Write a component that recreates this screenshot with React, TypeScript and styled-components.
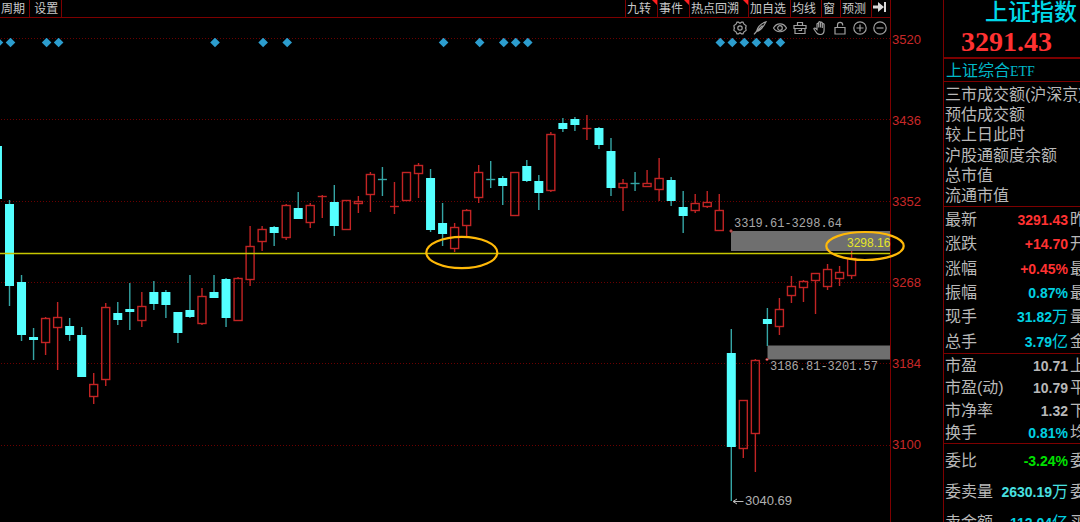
import React from 'react';
import styled, { createGlobalStyle } from 'styled-components';

const colors = {
  grid: '#7d0000',
  red: '#ff3232',
  candleRed: '#c22424',
  cyan: '#54ffff',
  teal: '#00d0e0',
  text: '#b8b8b8',
  yellow: '#c6c600',
  green: '#00e000',
  mark: '#ffb908',
};

const sans = `'Liberation Sans', 'Noto Sans CJK SC', sans-serif`;
const serif = `'Liberation Serif', 'Noto Sans CJK SC', serif`;
const mono = `'Liberation Mono', monospace`;

const GlobalStyle = createGlobalStyle`
  * { box-sizing: border-box; }
  body { margin: 0; background: #000; color: ${colors.text}; font-family: ${sans}; overflow: hidden; }
  button { appearance: none; background: none; border: 0; padding: 0; margin: 0; color: inherit; font: inherit; cursor: pointer; }
`;

const Screen = styled.div`
  display: flex;
  height: 100vh;
  overflow: hidden;
`;

const ChartArea = styled.main`
  flex: 1;
  min-width: 0;
  display: flex;
  flex-direction: column;
  border-right: 1px solid ${colors.grid};
  position: relative;
  z-index: 1;
`;

const TabBar = styled.nav`
  display: flex;
  justify-content: space-between;
  height: 18px;
  border-bottom: 1px solid ${colors.grid};
`;

const TabGroup = styled.div`
  display: flex;
`;

const Tab = styled.button<{ $side: 'left' | 'right'; $width: number; $hot?: boolean }>`
  position: relative;
  width: ${(p) => p.$width}px;
  padding-left: 1px;
  border-style: solid;
  border-color: ${colors.grid};
  border-width: 0;
  border-${(p) => (p.$side === 'left' ? 'right' : 'left')}-width: 1px;
  font-size: 12px;
  line-height: 16px;
  text-align: left;
  white-space: nowrap;
  color: #c8c8c8;
  ${(p) =>
    p.$hot &&
    `&::after {
      content: '';
      position: absolute;
      top: 0;
      right: 0;
      border-top: 5px solid #ff2020;
      border-left: 5px solid transparent;
    }`}
`;

const Tools = styled.div`
  display: flex;
  justify-content: flex-end;
  height: 20px;
`;

const Tool = styled.button`
  display: grid;
  place-items: center;
  width: 20px;
  color: #a0a0a0;
  svg { display: block; }
`;

const Plot = styled.div`
  flex: 1;
  display: flex;
  justify-content: flex-end;
  min-height: 0;
  clip-path: inset(0 -20px 0 0);
  svg { flex: none; overflow: visible; display: block; }
`;

const Axis = styled.ul`
  flex: 0 0 52px;
  margin: 0;
  padding: 31px 0 0 1px;
  list-style: none;
`;

const Tick = styled.li`
  height: 81px;
  font-size: 13px;
  line-height: 17px;
  color: #c82828;
`;

const Panel = styled.aside`
  flex: 0 0 137px;
  border-left: 1px solid ${colors.grid};
  overflow: hidden;
  white-space: nowrap;
`;

const Quote = styled.header`
  height: 59px;
  border-bottom: 2px solid ${colors.grid};
`;

const IndexName = styled.h1`
  margin: 0;
  padding-left: 41px;
  font-size: 23px;
  line-height: 24px;
  font-weight: 500;
  color: #00d8e8;
`;

const Price = styled.div`
  padding-left: 17px;
  font: bold 28px/36px ${serif};
  color: ${colors.red};
`;

const EtfLink = styled.a`
  display: block;
  height: 23px;
  padding-left: 2px;
  border-bottom: 1px solid ${colors.grid};
  font: 16px/24px ${serif};
  color: #00b8c8;
  text-decoration: none;
`;

const Latin = styled.span`
  font-size: 14px;
`;

const StatList = styled.ul`
  display: grid;
  height: 125px;
  margin: 0;
  padding: 3px 0 0 1px;
  list-style: none;
  font-size: 16px;
  line-height: 20px;
  align-items: center;
  border-bottom: 1px solid ${colors.grid};
`;

const DataTable = styled.table<{ $height: number; $last?: boolean }>`
  width: 143px;
  height: ${(p) => p.$height}px;
  table-layout: fixed;
  border-collapse: separate;
  border-spacing: 0;
  border-bottom: ${(p) => (p.$last ? '0' : `1px solid ${colors.grid}`)};
`;

const Label = styled.th`
  width: 50px;
  padding: 2px 0 0 1px;
  font-size: 16px;
  line-height: 20px;
  font-weight: 400;
  text-align: left;
`;

const Value = styled.td<{ $color: string }>`
  width: 74px;
  padding: 2px 0 0;
  font-size: 14px;
  line-height: 20px;
  font-weight: 700;
  text-align: right;
  color: ${(p) => p.$color};
`;

const Unit = styled.span`
  font-size: 16px;
  font-weight: 400;
`;

const Next = styled.td`
  padding: 2px 0 0 2px;
  font-size: 16px;
  line-height: 20px;
`;

/* [high, body top, body bottom, low, rising] for each session, in plot units */
type Candle = [number, number, number, number, 0 | 1];
const candles: Candle[] = [
  [146, 146, 199, 199, 0], [200, 204, 286, 306, 0], [275, 282, 335, 341, 0], [328, 337, 340, 360, 0],
  [317, 318, 343, 355, 1], [302, 317, 328, 370, 1], [318, 326, 335, 341, 0], [327, 335, 377, 377, 0],
  [373, 384, 397, 404, 1], [303, 307, 380, 386, 1], [302, 313, 320, 325, 0], [283, 309, 312, 330, 0],
  [292, 306, 321, 327, 1], [281, 292, 304, 310, 0], [290, 292, 305, 318, 0], [312, 312, 333, 343, 0],
  [275, 310, 317, 318, 0], [288, 296, 324, 325, 1], [275, 292, 298, 298, 0], [278, 279, 318, 327, 0],
  [277, 278, 321, 321, 1], [226, 246, 280, 286, 1], [226, 229, 242, 251, 1], [226, 227, 233, 246, 0],
  [204, 205, 238, 240, 1], [192, 208, 219, 219, 0], [203, 205, 223, 228, 1], [195, 196, 197, 218, 1],
  [185, 202, 226, 236, 0], [200, 200, 230, 230, 1], [196, 201, 204, 213, 1], [172, 174, 195, 212, 1],
  [167, 179, 180, 196, 0], [182, 206, 207, 214, 1], [172, 172, 201, 201, 1], [163, 165, 174, 198, 1],
  [169, 178, 230, 232, 0], [203, 223, 234, 246, 0], [223, 227, 249, 252, 1], [209, 210, 226, 236, 1],
  [165, 172, 198, 203, 1], [161, 179, 180, 188, 0], [176, 178, 186, 205, 0], [172, 172, 216, 216, 1],
  [160, 166, 181, 182, 0], [175, 181, 193, 210, 0], [132, 134, 191, 192, 1], [118, 123, 129, 132, 0],
  [117, 119, 125, 131, 0], [115, 128, 129, 140, 1], [127, 128, 145, 149, 0], [138, 151, 188, 196, 0],
  [179, 183, 188, 211, 1], [172, 183, 184, 191, 0], [170, 183, 187, 187, 1], [158, 178, 190, 201, 1],
  [177, 180, 201, 206, 0], [191, 207, 216, 233, 0], [194, 203, 211, 213, 1], [191, 202, 207, 208, 1],
  [194, 210, 231, 231, 1], [329, 353, 447, 501, 0], [400, 400, 449, 458, 1], [359, 360, 434, 472, 1],
  [308, 319, 324, 346, 0], [298, 309, 327, 335, 1], [276, 286, 296, 303, 1], [280, 281, 288, 302, 1],
  [273, 273, 281, 314, 1], [264, 269, 287, 290, 1], [266, 272, 279, 286, 1], [251, 258, 276, 279, 1],
];

const centre = (i: number) => 9.5 + (i - 1) * 12.03;
const events = [0, 1, 4, 5, 18, 22, 24, 37, 40, 42, 43, 44, 60, 61, 62, 63, 64, 65];
const gridLines = [38.5, 119.5, 201.5, 282.5, 363.5, 445.5];
const ticks = [3520, 3436, 3352, 3268, 3184, 3100];

function CandleShape({ index, data }: { index: number; data: Candle }) {
  const [high, top, bottom, low, rising] = data;
  const x = centre(index);
  const stroke = rising ? colors.candleRed : '#35a5a5';
  const flat = bottom - top <= 1;
  return (
    <g stroke={stroke} strokeWidth={1.4}>
      {high < top && <line x1={x} x2={x} y1={high} y2={top} />}
      {low > bottom && <line x1={x} x2={x} y1={bottom} y2={low} />}
      {flat ? (
        <line x1={x - 4.5} x2={x + 4.5} y1={top + 0.5} y2={top + 0.5} />
      ) : rising ? (
        <rect x={x - 4} y={top + 0.5} width={8} height={bottom - top - 1} fill="none" />
      ) : (
        <rect x={x - 4.5} y={top} width={9} height={bottom - top} fill={colors.cyan} stroke="none" />
      )}
    </g>
  );
}

function Chart() {
  return (
    <svg width="890" height="484" viewBox="0 38 890 484" role="img" aria-label="上证指数 K线">
      <g stroke="#6a0000" strokeDasharray="1 2">
        {gridLines.map((y) => (
          <line key={y} x1={-2000} x2={890} y1={y} y2={y} />
        ))}
      </g>
      <g fill="#2c9dce">
        {events.map((i) => (
          <path key={i} d={`M${centre(i) + 1} 37.7l4.800 4.800-4.800 4.800-4.800-4.800z`} />
        ))}
      </g>
      <rect x="731" y="231" width="159" height="20" fill="#6f6f6f" />
      <rect x="767.5" y="345.5" width="122.5" height="14" fill="#6f6f6f" />
      {candles.map((c, i) => (
        <CandleShape key={i} index={i} data={c} />
      ))}
      <line x1={-2000} x2={890} y1={253.5} y2={253.5} stroke={colors.yellow} strokeWidth={1.4} />
      <g fill="#d8b0b0" stroke="#a02020">
        <circle cx="731" cy="231" r="1.2" />
        <circle cx="767" cy="359.5" r="1.2" />
      </g>
      <g fill="#a8a8a8" fontFamily={mono} fontSize="12">
        <text x="734" y="227">3319.61-3298.64</text>
        <text x="770" y="370">3186.81-3201.57</text>
      </g>
      <text x="847" y="247" fill="#e6e628" fontFamily={sans} fontSize="12">3298.16</text>
      <text x="745" y="505" fill="#b0b0b0" fontFamily={sans} fontSize="13">3040.69</text>
      <path d="M743.5 501.500H733M737 499l-4 2.500 4 2.500" fill="none" stroke="#b8b8b8" />
      <g fill="none" stroke={colors.mark} strokeWidth={2.2}>
        <ellipse cx="461.800" cy="252.500" rx="35.500" ry="15.700" />
        <ellipse cx="865" cy="246" rx="38.700" ry="14" />
      </g>
    </svg>
  );
}

const toolIcons: { name: string; art: React.ReactNode }[] = [
  { name: '设置', art: <><path d="M4 1.200h1.500l1.500 1 1.500-1H10l1 2 2 1.300v1.500L12.500 7l.5 1v1.500L11 10.800l-1 2H8.500l-1.500-1-1.500 1H4l-1-2-2-1.300V8l.5-1L1 6V4.500l2-1.300z" /><circle cx="7" cy="7" r="2.200" /></> },
  { name: '画笔', art: <path d="M13 .8C8 2.500 4.500 6 3.500 10.500c4-1 7-4.500 9.500-9.700zM3.500 10.500L1 13.300M3.500 10.500L9.500 4.500" /> },
  { name: '显示', art: <><path d="M.5 7C3.500 1.500 10.500 1.500 13.500 7 10.500 12 3.500 12 .5 7z" /><circle cx="7" cy="7" r="2.300" /></> },
  { name: '工具箱', art: <path d="M1 4.500h12v3H1zM2 7.500v5h10v-5M4.500 4.500v-3h5v3M5.500 9.500h3v-2" /> },
  { name: '拖动', art: <path d="M4 8.500V3a.9.9 0 011.700 0v3.500V1.500a.9.9 0 011.800 0v5-4.500a.9.9 0 011.800 0V7 3.500a.9.9 0 011.800 0V9c0 3-1.500 4.500-4 4.500-2.500 0-3.500-1-4.500-3L.8 7.800c.5-1 1.500-.9 2.200-.1z" /> },
  { name: '锁定', art: <path d="M2 6.500h10v6.500H2zM4.500 6.500V4a2.600 2.600 0 015.200 0v.5" /> },
  { name: '放大', art: <><circle cx="7" cy="7" r="6.200" /><path d="M7 3.500v7M3.500 7h7" /></> },
  { name: '缩小', art: <><circle cx="7" cy="7" r="6.200" /><path d="M3.500 7h7" /></> },
];

const rightTabs: { text: string; width: number; hot?: boolean }[] = [
  { text: '九转', width: 32, hot: true },
  { text: '事件', width: 32, hot: true },
  { text: '热点回溯', width: 59, hot: true },
  { text: '加自选', width: 42 },
  { text: '均线', width: 31 },
  { text: '窗', width: 19 },
  { text: '预测', width: 31 },
];

type Row = { label: string; value: string; unit?: string; color: string; next: string };
const quoteRows: Row[] = [
  { label: '最新', value: '3291.43', color: colors.red, next: '昨' },
  { label: '涨跌', value: '+14.70', color: colors.red, next: '开' },
  { label: '涨幅', value: '+0.45%', color: colors.red, next: '最' },
  { label: '振幅', value: '0.87%', color: colors.teal, next: '最' },
  { label: '现手', value: '31.82', unit: '万', color: colors.teal, next: '量' },
  { label: '总手', value: '3.79', unit: '亿', color: colors.teal, next: '金' },
];
const ratioRows: Row[] = [
  { label: '市盈', value: '10.71', color: colors.text, next: '上' },
  { label: '市盈(动)', value: '10.79', color: colors.text, next: '平' },
  { label: '市净率', value: '1.32', color: colors.text, next: '下' },
  { label: '换手', value: '0.81%', color: colors.teal, next: '均' },
];
const orderRows: Row[] = [
  { label: '委比', value: '-3.24%', color: colors.green, next: '委' },
  { label: '委卖量', value: '2630.19', unit: '万', color: '#48e0e0', next: '委' },
  { label: '卖金额', value: '112.04', unit: '亿', color: colors.teal, next: '买' },
];
const stats = ['三市成交额(沪深京)', '预估成交额', '较上日此时', '沪股通额度余额', '总市值', '流通市值'];

function Rows({ rows, height, last }: { rows: Row[]; height: number; last?: boolean }) {
  return (
    <DataTable $height={height} $last={last}>
      <tbody>
        {rows.map((r) => (
          <tr key={r.label}>
            <Label scope="row">{r.label}</Label>
            <Value $color={r.color}>
              {r.value}
              {r.unit && <Unit>{r.unit}</Unit>}
            </Value>
            <Next>{r.next}</Next>
          </tr>
        ))}
      </tbody>
    </DataTable>
  );
}

export default function App() {
  return (
    <Screen>
      <GlobalStyle />
      <ChartArea>
        <TabBar>
          <TabGroup>
            <Tab $side="left" $width={30}>周期</Tab>
            <Tab $side="left" $width={32}>&nbsp;设置</Tab>
          </TabGroup>
          <TabGroup>
            {rightTabs.map((t) => (
              <Tab key={t.text} $side="right" $width={t.width} $hot={t.hot}>{t.text}</Tab>
            ))}
            <Tab $side="right" $width={19} aria-label="展开">
              <svg width="14" height="14" viewBox="0 0 14 14" fill="#d8d8d8">
                <path d="M0 5.500h5V2l6 5-6 5V8.500H0zM11 2h2v10h-2z" />
              </svg>
            </Tab>
          </TabGroup>
        </TabBar>
        <Tools>
          {toolIcons.map((t) => (
            <Tool key={t.name} aria-label={t.name}>
              <svg width="14" height="14" viewBox="0 0 14 14" fill="none" stroke="currentColor" strokeWidth="1.200">{t.art}</svg>
            </Tool>
          ))}
        </Tools>
        <Plot>
          <Chart />
        </Plot>
      </ChartArea>
      <Axis>
        {ticks.map((t) => (
          <Tick key={t}>{t}</Tick>
        ))}
      </Axis>
      <Panel>
        <Quote>
          <IndexName>上证指数</IndexName>
          <Price>3291.43</Price>
        </Quote>
        <EtfLink href="#etf">上证综合<Latin>ETF</Latin></EtfLink>
        <StatList>
          {stats.map((s) => (
            <li key={s}>{s}</li>
          ))}
        </StatList>
        <Rows rows={quoteRows} height={147} />
        <Rows rows={ratioRows} height={90} />
        <Rows rows={orderRows} height={93} last />
      </Panel>
    </Screen>
  );
}
